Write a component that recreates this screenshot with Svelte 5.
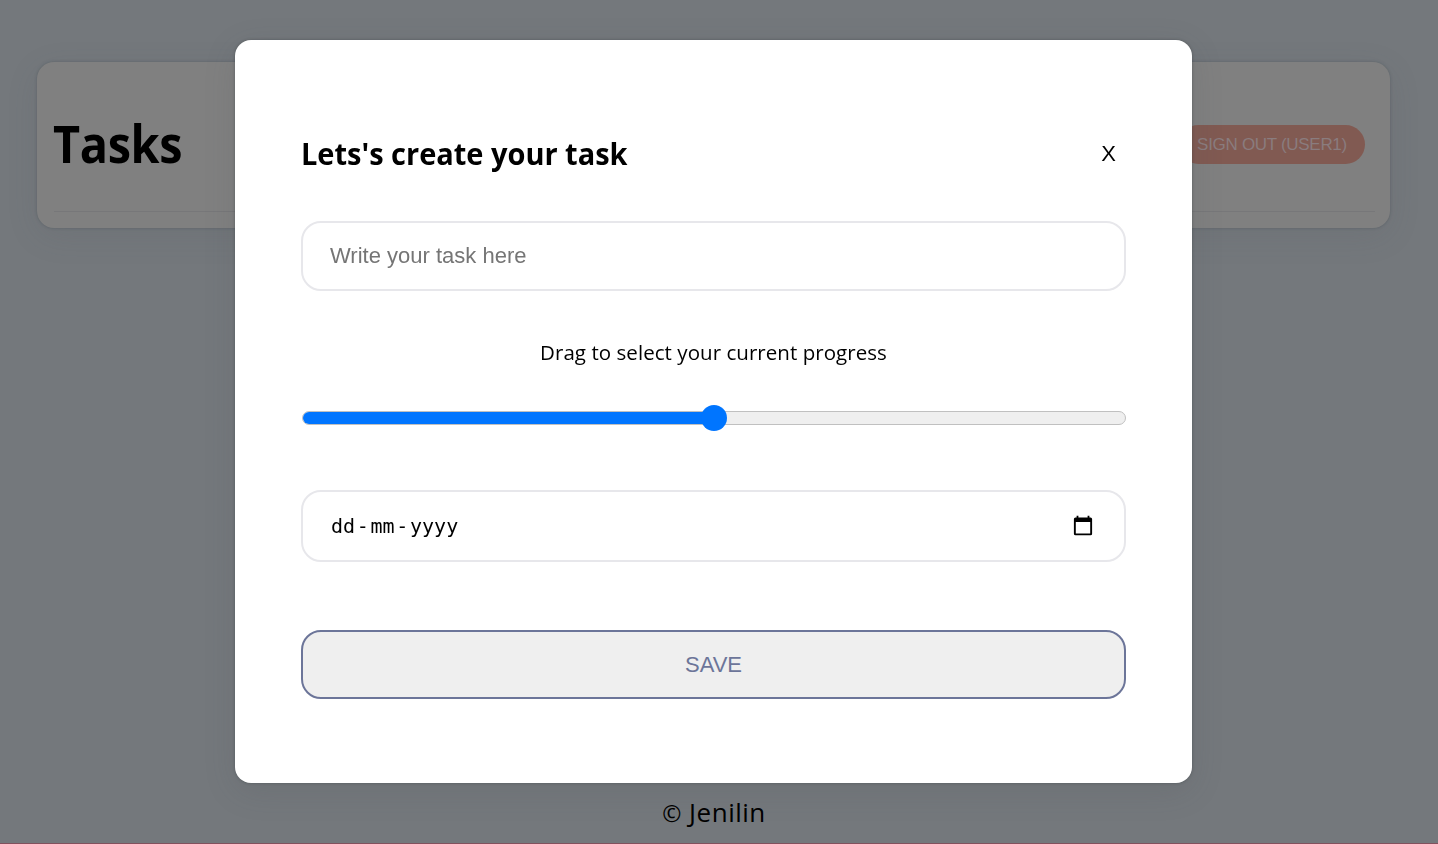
<script>
  let progress = $state(50);
  let title = $state('');
</script>

<div class="page">
  <div class="app">
    <header class="list-header">
      <h1>Tasks</h1>
      <button class="signout">SIGN OUT (USER1)</button>
    </header>
  </div>
  <p class="copyright"><span class="mark">©</span> Jenilin</p>
  <div class="strip"></div>
</div>

<div class="overlay">
  <div class="modal">
    <div class="title-row">
      <h3>Lets's create your task</h3>
      <button class="close">X</button>
    </div>
    <input class="field task" placeholder="Write your task here" bind:value={title} />
    <label for="range">Drag to select your current progress</label>
    <div class="slider" id="range">
      <div class="fill" style="width: {progress}%"></div>
      <div class="thumb" style="left: {progress}%"></div>
    </div>
    <div class="field date">
      <div class="parts"><span>dd</span><span class="dash">-</span><span>mm</span><span class="dash">-</span><span>yyyy</span></div>
      <svg width="20" height="22" viewBox="0 0 20 22">
        <path fill="#000" fill-rule="evenodd" d="M3.600 0.800h1.800v1.700h9.200V0.800h1.800v1.700h1.100A1.600 1.600 0 0 1 19.100 4.100V18.700A1.600 1.600 0 0 1 17.500 20.300H2.500A1.600 1.600 0 0 1 0.900 18.700V4.100A1.600 1.600 0 0 1 2.500 2.500h1.100zM2.800 7.100V18.400H17.200V7.100z" />
      </svg>
    </div>
    <button class="save">SAVE</button>
  </div>
</div>

<style>
  :global(body) {
    margin: 0;
    overflow: hidden;
    background: #74787c;
    font-family: "Open Sans", "Noto Sans", sans-serif;
    color: #000;
  }
  .page {
    box-sizing: border-box;
    height: 844px;
    padding-top: 62px;
    display: flex;
    flex-direction: column;
  }
  .app {
    box-sizing: border-box;
    width: 1353px;
    height: 166px;
    margin-left: 37px;
    padding: 0 15px 16px 17px;
    border-radius: 17px;
    background: #808080;
    box-shadow: 0 0 3px rgba(50, 60, 70, 0.35), 0 8px 32px rgba(70, 80, 90, 0.12);
  }
  .list-header {
    box-sizing: border-box;
    height: 150px;
    border-bottom: 1px solid #777779;
    display: flex;
    align-items: center;
    justify-content: space-between;
    padding: 15px 10px 0 0;
  }
  h1 {
    margin: 0;
    font-size: 52px;
    line-height: 60px;
    font-weight: 700;
    letter-spacing: -0.400px;
    transform: translate(-1px, -1px) scaleX(0.9);
    transform-origin: left;
  }
  .signout {
    width: 186px;
    height: 39px;
    padding: 1px 0 0;
    border: 0;
    border-radius: 20px;
    background: #815a52;
    color: #8a7c7e;
    font: 17px "Liberation Sans", sans-serif;
    letter-spacing: -0.300px;
  }
  .copyright {
    margin: auto 10px 10px 0;
    text-align: center;
    font-size: 26px;
    line-height: 40px;
    letter-spacing: 0.500px;
  }
  .mark {
    font-size: 23px;
  }
  .strip {
    height: 1px;
    flex: none;
    background: #82515d;
  }
  .overlay {
    position: fixed;
    inset: 0;
    padding: 40px 0 0 235px;
  }
  .modal {
    box-sizing: border-box;
    width: 957px;
    height: 743px;
    padding: 90px 66px 84px;
    display: flex;
    flex-direction: column;
    background: #fff;
    border-radius: 16px;
    box-shadow: 0 0 3px rgba(40, 48, 50, 0.4), 0 8px 32px rgba(70, 75, 80, 0.15);
  }
  .title-row {
    display: flex;
    justify-content: space-between;
    align-items: center;
    height: 48px;
  }
  h3 {
    margin: 0;
    font-size: 29.500px;
    line-height: 40px;
    font-weight: 700;
    transform: scaleX(0.982);
    transform-origin: left;
  }
  .close {
    width: 35px;
    padding: 0;
    border: 0;
    background: none;
    color: #000;
    font: 22px "Liberation Sans", sans-serif;
  }
  .field {
    box-sizing: border-box;
    flex: none;
    width: 825px;
    border: 2px solid #e7e7eb;
    border-radius: 20px;
    background: #fff;
  }
  .task {
    height: 70px;
    margin-top: 43px;
    padding: 0 27px;
    font: 22px "Liberation Sans", sans-serif;
    outline: none;
  }
  .task::placeholder {
    color: #757575;
  }
  label {
    margin-top: 45px;
    height: 33px;
    line-height: 32px;
    font-size: 20.500px;
    letter-spacing: 0.050px;
    text-align: center;
    white-space: nowrap;
  }
  .slider {
    position: relative;
    box-sizing: border-box;
    height: 14px;
    width: 824px;
    margin: 42px 0 0 0.500px;
    border: 1px solid #c0c0c0;
    border-radius: 7px;
    background: #efefef;
    flex: none;
  }
  .fill {
    height: 12px;
    border-radius: 7px 0 0 7px;
    background: #0075ff;
  }
  .thumb {
    position: absolute;
    top: -7px;
    width: 26px;
    height: 26px;
    margin-left: -13px;
    border-radius: 50%;
    background: #0075ff;
  }
  .date {
    height: 72px;
    margin-top: 65px;
    padding: 0 31px 0 28px;
    display: flex;
    align-items: center;
    justify-content: space-between;
  }
  .parts {
    display: flex;
    font: 20px/28px "DejaVu Sans Mono", monospace;
  }
  .dash {
    padding: 0 1.7px;
  }
  .save {
    box-sizing: border-box;
    flex: none;
    width: 825px;
    height: 69px;
    margin-top: 68px;
    padding: 0;
    border: 2px solid #6c7599;
    border-radius: 20px;
    background: #efefef;
    color: #6c7599;
    font: 22px "Liberation Sans", sans-serif;
  }
</style>
